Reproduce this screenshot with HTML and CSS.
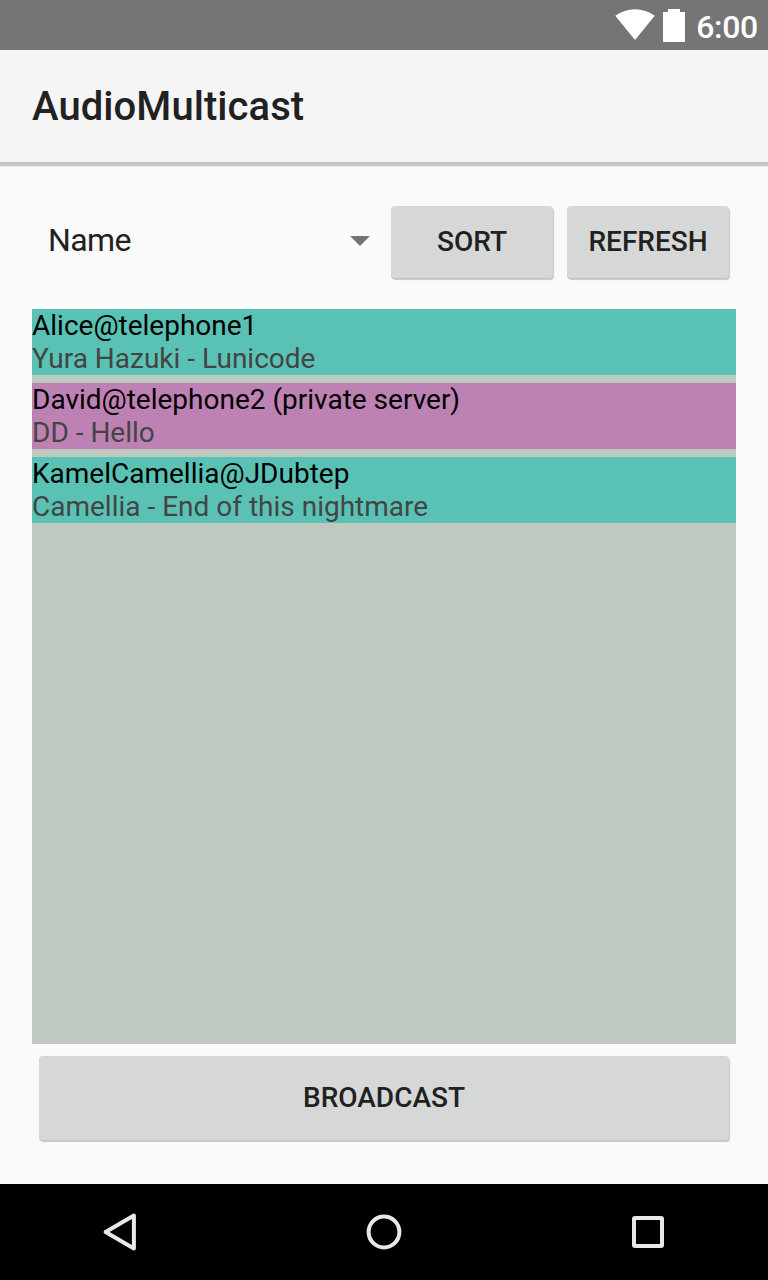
FILE: index.html
```html
<!DOCTYPE html>
<html lang="en">
<head>
<meta charset="utf-8">
<title>AudioMulticast</title>
<link rel="stylesheet" href="styles.css">
</head>
<body>
<div class="status">
  <svg class="wifi" width="40" height="31" viewBox="0 0 40 31"><path d="M.3 6.8Q9 .2 20 .2T39.7 6.8L20 31Z"/></svg>
  <svg class="battery" width="22" height="33" viewBox="0 0 22 33"><path d="M5 0h12v3h5v30H0V3h5z"/></svg>
  <span class="clock">6:00</span>
</div>
<header class="appbar"><h1>AudioMulticast</h1></header>
<main class="content">
  <div class="controls">
    <div class="spinner"><span>Name</span><svg width="20" height="10" viewBox="0 0 20 10"><path d="M0 0h20L10 10z"/></svg></div>
    <button class="btn">SORT</button>
    <button class="btn">REFRESH</button>
  </div>
  <div class="list">
    <div class="row"><div class="host">Alice@telephone1</div><div class="track">Yura Hazuki - Lunicode</div></div>
    <div class="row private"><div class="host">David@telephone2 (private server)</div><div class="track">DD - Hello</div></div>
    <div class="row"><div class="host">KamelCamellia@JDubtep</div><div class="track">Camellia - End of this nightmare</div></div>
  </div>
  <button class="btn broadcast">BROADCAST</button>
</main>
<nav class="navbar">
  <svg width="48" height="48" viewBox="0 0 48 48"><path d="M37.9 7.6V40.4L9.6 24Z"/></svg>
  <svg width="48" height="48" viewBox="0 0 48 48"><circle cx="24" cy="24" r="15.4"/></svg>
  <svg width="48" height="48" viewBox="0 0 48 48"><rect x="10" y="10" width="28" height="28" rx="1"/></svg>
</nav>
</body>
</html>
```
FILE: styles.css
```css
* { box-sizing: border-box; }
body { margin: 0; width: 768px; height: 1280px; display: flex; flex-direction: column; background: #fafafa; font-family: Roboto, sans-serif; overflow: hidden; }
.status { height: 50px; flex: none; background: #757575; display: flex; align-items: flex-start; justify-content: flex-end; padding: 9px 10px 0 0; color: #fff; }
.status svg { fill: #fff; }
.battery { margin: 0 11px 0 8px; }
.clock { font-size: 32px; line-height: 36px; font-weight: 500; letter-spacing: -0.3px; }
.appbar { height: 112px; flex: none; background: #f5f5f5; padding: 2px 0 0 32px; display: flex; align-items: center; box-shadow: 0 3px 0 #c4c4c4, 0 4px 0 #d0d0d0, 0 5px 0 #e6e6e6; }
.appbar h1 { margin: 0; font-size: 40px; font-weight: 500; color: #212121; line-height: 48px; letter-spacing: 0.07px; }
.content { flex: 1; padding: 44px 32px 0; display: flex; flex-direction: column; }
.controls { display: flex; gap: 14px; height: 72px; padding-right: 7px; }
.spinner { flex: 1; display: flex; align-items: center; justify-content: space-between; padding: 0 7px 4px 16px; font-size: 32px; letter-spacing: -0.6px; color: #212121; }
.spinner svg { fill: #757575; margin-top: 2px; }
.btn { width: 162px; border: 0; border-radius: 4px; padding: 0 0 2px; background: #d6d7d7; box-shadow: 0 1px 0 #c4c5c5, 1px 2px 1px #c8c8c8; font: 500 28px/33px Roboto, sans-serif; color: #212121; }
.list { margin-top: 31px; height: 735px; background: #bfc9bf; display: flex; flex-direction: column; gap: 8px; }
.row { height: 66px; background: #5ac2b5; font-size: 28px; line-height: 33px; color: #000; }
.private { background: #be81b4; }
.track { color: #444; }
.broadcast { width: auto; height: 84px; margin: 12px 7px 0; }
.navbar { height: 96px; flex: none; background: #000; display: flex; align-items: center; justify-content: space-between; padding: 0 96px; }
.navbar svg { fill: none; stroke: #e9e9e9; stroke-width: 4; stroke-linejoin: round; }
```
